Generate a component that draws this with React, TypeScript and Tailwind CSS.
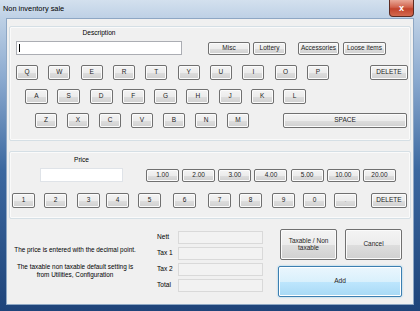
import React from "react";
import clsx from "clsx";

function Btn({ className, children }: { className?: string; children?: React.ReactNode }) {
  return (
    <div
      className={clsx(
        "flex shrink-0 items-center justify-center rounded-[2px] border border-[#707070] bg-[linear-gradient(to_bottom,#f4f4f4_0%,#ececec_50%,#dedede_51%,#d0d0d0_100%)] text-[6.5px] leading-none text-[#1e1e1e] shadow-[inset_0_0_0_1px_#fbfbfb]",
        className
      )}
    >
      {children}
    </div>
  );
}

export default function App() {
  const row1 = ["Q", "W", "E", "R", "T", "Y", "U", "I", "O", "P"];
  const row2 = ["A", "S", "D", "F", "G", "H", "J", "K", "L"];
  const row3 = ["Z", "X", "C", "V", "B", "N", "M"];
  const amounts = ["1.00", "2.00", "3.00", "4.00", "5.00", "10.00", "20.00"];

  return (
    <div className="flex h-[311px] w-[420px] flex-col overflow-hidden bg-[linear-gradient(to_bottom,#d3e0ee_0px,#bdd0e5_19px,#8aa9cf_80px,#3b68a0_170px,#1f447a_311px)] font-['Liberation_Sans',Arial,sans-serif] text-black">
      {/* Title bar */}
      <div className="flex h-[19px] items-start">
        <div className="pl-[3px] pt-[4px] text-[7.4px] leading-[10px] text-black">Non inventory sale</div>
        <div className="ml-auto mr-[6px] flex h-[17px] w-[25px] items-center justify-center rounded-b-[4px] border border-t-0 border-[#5c2b22] bg-[linear-gradient(to_bottom,#e9a797_0%,#d1634d_45%,#c2432c_55%,#d36a4f_100%)] text-[9px] font-bold leading-none text-white">
          x
        </div>
      </div>

      <div className="flex">
        <div className="w-[7px]" />
        {/* Client area */}
        <div className="flex h-[285px] w-[406px] flex-col bg-[#f0f0f0] pl-[2px] pt-[7px] shadow-[0_0_0_1px_#8ea7c4]">
          {/* Panel 1 */}
          <div className="flex h-[115px] w-[402px] flex-col rounded-[2px] border border-[#d5dfe5] shadow-[inset_0_0_0_1px_#fafafa]">
            <div className="ml-[6px] mt-[1px] h-[10px] w-[166px] text-center text-[6.6px] leading-[10px]">Description</div>
            <div className="mt-[3px] flex items-start">
              <div className="ml-[6px] flex h-[14px] w-[166px] items-center border border-[#abadb3] bg-white pl-[2px]">
                <div className="h-[8px] w-px bg-black" />
              </div>
              <Btn className="ml-[26px] mt-[1px] h-[13px] w-[42px]">Misc</Btn>
              <Btn className="ml-[3px] mt-[1px] h-[13px] w-[33px]">Lottery</Btn>
              <Btn className="ml-[12px] mt-[1px] h-[13px] w-[41px]">Accessories</Btn>
              <Btn className="ml-[4px] mt-[1px] h-[13px] w-[43px]">Loose items</Btn>
            </div>

            <div className="mt-[10px] flex">
              <div className="ml-[6px] flex gap-[10.33px]">
                {row1.map((k) => (
                  <Btn key={k} className="h-[15px] w-[22px]">{k}</Btn>
                ))}
              </div>
              <Btn className="ml-[41px] h-[15px] w-[38px]">DELETE</Btn>
            </div>
            <div className="ml-[15px] mt-[9px] flex gap-[9.25px]">
              {row2.map((k) => (
                <Btn key={k} className="h-[15px] w-[23px]">{k}</Btn>
              ))}
            </div>
            <div className="mt-[9px] flex">
              <div className="ml-[25px] flex gap-[10px]">
                {row3.map((k) => (
                  <Btn key={k} className="h-[15px] w-[22px]">{k}</Btn>
                ))}
              </div>
              <Btn className="ml-[34px] h-[15px] w-[124px]">SPACE</Btn>
            </div>
          </div>

          {/* Panel 2 */}
          <div className="mt-[10px] flex h-[68px] w-[402px] flex-col rounded-[2px] border border-[#d5dfe5] shadow-[inset_0_0_0_1px_#fafafa]">
            <div className="ml-[30px] mt-[3px] h-[10px] w-[83px] text-center text-[6.6px] leading-[10px]">Price</div>
            <div className="mt-[3px] flex items-start">
              <div className="ml-[30px] h-[14px] w-[83px] border border-[#dfe3e8] bg-white" />
              <div className="ml-[23px] mt-[1px] flex gap-[3.17px]">
                {amounts.map((a) => (
                  <Btn key={a} className="h-[13px] w-[33px]">{a}</Btn>
                ))}
              </div>
            </div>
            <div className="mt-[11px] flex">
              <Btn className="ml-[2px] h-[15px] w-[23px]">1</Btn>
              <Btn className="ml-[9px] h-[15px] w-[23px]">2</Btn>
              <Btn className="ml-[10px] h-[15px] w-[23px]">3</Btn>
              <Btn className="ml-[6px] h-[15px] w-[23px]">4</Btn>
              <Btn className="ml-[9px] h-[15px] w-[23px]">5</Btn>
              <Btn className="ml-[12px] h-[15px] w-[23px]">6</Btn>
              <Btn className="ml-[12px] h-[15px] w-[23px]">7</Btn>
              <Btn className="ml-[8px] h-[15px] w-[23px]">8</Btn>
              <Btn className="ml-[10px] h-[15px] w-[23px]">9</Btn>
              <Btn className="ml-[8px] h-[15px] w-[23px]">0</Btn>
              <Btn className="ml-[8px] h-[15px] w-[23px] text-[#9a9a9a]">.</Btn>
              <Btn className="ml-[14px] h-[15px] w-[36px]">DELETE</Btn>
            </div>
          </div>

          {/* Bottom area */}
          <div className="-ml-[2px] flex">
            <div className="w-[136px] pt-[27px] text-center text-[6.4px] leading-[8px]">
              <div>The price is entered with the decimal point.</div>
              <div className="mt-[9px]">
                The taxable non taxable default setting is
                <br />
                from Utilities, Configuration
              </div>
            </div>

            <div className="ml-[14px] mt-[12px] flex flex-col gap-[3px]">
              {["Nett", "Tax 1", "Tax 2", "Total"].map((l) => (
                <div key={l} className="flex h-[13px] items-center">
                  <div className="w-[21px] text-[6.6px] leading-none">{l}</div>
                  <div className="h-[13px] w-[85px] border border-[#d9d9d9] bg-[#f2f2f2]" />
                </div>
              ))}
            </div>

            <div className="ml-[15px] mt-[10px] flex flex-col">
              <div className="flex">
                <Btn className="ml-[2px] h-[31px] w-[57px] text-center leading-[8px]">
                  Taxable / Non
                  <br />
                  taxable
                </Btn>
                <Btn className="ml-[8px] h-[31px] w-[57px]">Cancel</Btn>
              </div>
              <div className="mt-[6px] flex h-[31px] w-[124px] items-center justify-center rounded-[2px] border border-[#3c7fb1] bg-[linear-gradient(to_bottom,#eaf6fd_0%,#d9f0fc_50%,#bee6fd_51%,#a7d9f5_100%)] text-[6.6px] leading-none text-[#1e1e1e] shadow-[inset_0_0_0_1px_#ffffff,0_0_2px_#7fc4ea]">
                Add
              </div>
            </div>
          </div>
        </div>
        <div className="w-[7px]" />
      </div>
    </div>
  );
}
